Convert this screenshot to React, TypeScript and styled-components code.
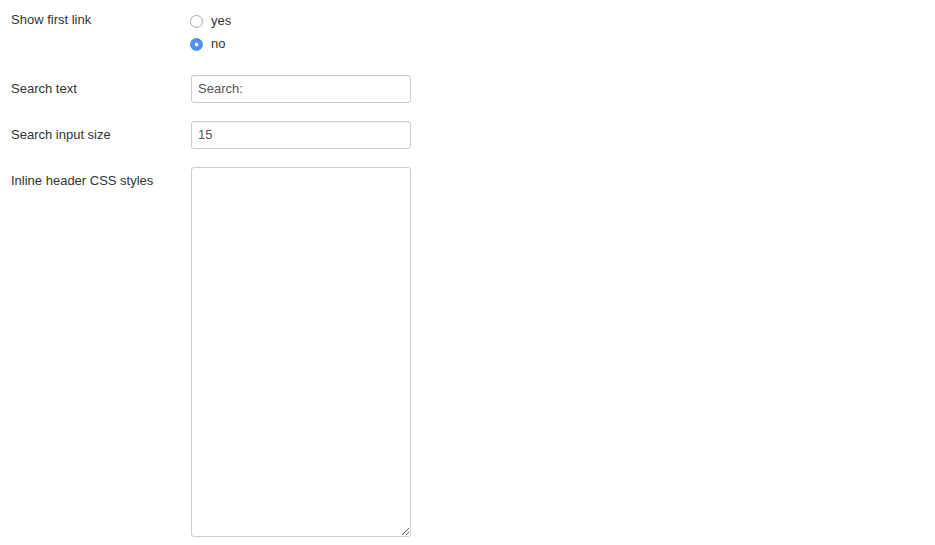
import styled, { createGlobalStyle } from 'styled-components';

const GlobalStyle = createGlobalStyle`
  html, body {
    margin: 0;
    padding: 0;
    background: #fff;
  }
  body {
    font-family: "Liberation Sans", Arial, sans-serif;
    font-size: 13px;
    color: #333;
  }
`;

const Form = styled.form`
  display: grid;
  grid-template-columns: 180px 220px;
  row-gap: 18px;
  padding: 6px 11px 0;
`;

const Label = styled.label`
  padding-top: 5px;
  line-height: 18px;
  color: #333;
`;

const RadioGroup = styled.div`
  display: flex;
  flex-direction: column;
  padding: 3px 0 2px;
`;

const RadioOption = styled.label`
  display: flex;
  align-items: center;
  height: 23px;
  gap: 8px;
  color: #333;
  cursor: pointer;
`;

const Radio = styled.input.attrs({ type: 'radio' })`
  appearance: none;
  margin: 0 0 0 -1px;
  width: 13px;
  height: 13px;
  border-radius: 50%;
  border: 1px solid #a9a9a9;
  background: #fff;
  position: relative;
  top: 1px;

  &:checked {
    border-color: #4a8df0;
    background: radial-gradient(circle, #fff 0 1.6px, #4f90f2 2.2px);
  }
`;

const TextInput = styled.input`
  box-sizing: border-box;
  width: 220px;
  height: 28px;
  padding: 3px 6px 5px;
  border: 1px solid #ccc;
  border-radius: 3px;
  font-family: inherit;
  font-size: 13px;
  color: #555;
  box-shadow: inset 0 1px 1px rgba(0, 0, 0, 0.04);
  outline: none;
`;

const TextArea = styled.textarea`
  box-sizing: border-box;
  width: 220px;
  height: 370px;
  padding: 6px;
  border: 1px solid #ccc;
  border-radius: 3px;
  font-family: inherit;
  font-size: 13px;
  color: #555;
  outline: none;
  display: block;
`;

const App = () => (
  <>
    <GlobalStyle />
    <Form onSubmit={(e) => e.preventDefault()}>
      <Label>Show first link</Label>
      <RadioGroup>
        <RadioOption>
          <Radio name="show_first_link" value="yes" />
          yes
        </RadioOption>
        <RadioOption>
          <Radio name="show_first_link" value="no" defaultChecked />
          no
        </RadioOption>
      </RadioGroup>

      <Label htmlFor="search_text">Search text</Label>
      <TextInput id="search_text" defaultValue="Search:" />

      <Label htmlFor="search_size">Search input size</Label>
      <TextInput id="search_size" defaultValue="15" />

      <Label htmlFor="header_css">Inline header CSS styles</Label>
      <TextArea id="header_css" />
    </Form>
  </>
);

export default App;
